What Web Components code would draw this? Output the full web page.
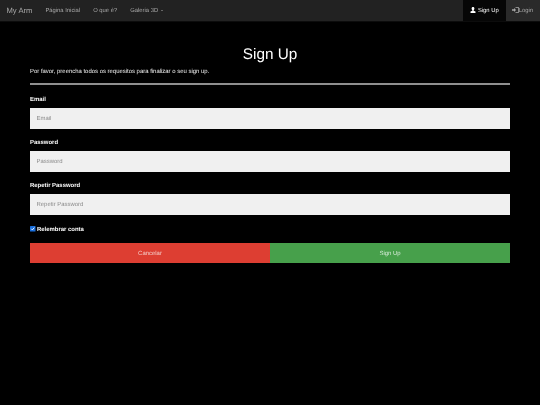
<!DOCTYPE html>
<html lang="pt"><head><meta charset="utf-8"><title>Sign Up</title>
<style>
html,body{margin:0;padding:0;background:#000;color:#fff;font:5.95px/9px "Liberation Sans",Arial,sans-serif;height:405px;overflow:hidden;text-rendering:geometricPrecision}
app-navbar,signup-form{filter:blur(.2px)}
</style></head><body>
<app-navbar>
  <nav-link slot="left">Página Inicial</nav-link>
  <nav-link slot="left">O que é?</nav-link>
  <nav-link slot="left" caret>Galeria 3D</nav-link>
  <nav-link slot="right" active icon="user">Sign Up</nav-link>
  <nav-link slot="right" soft icon="login">Login</nav-link>
</app-navbar>
<signup-form>
  <form-field label="Email" placeholder="Email"></form-field>
  <form-field label="Password" placeholder="Password"></form-field>
  <form-field label="Repetir Password" placeholder="Repetir Password"></form-field>
</signup-form>
<script>
function def(name, html, init){
  customElements.define(name, class extends HTMLElement{
    constructor(){super();this.attachShadow({mode:'open'}).innerHTML=html;}
    connectedCallback(){ if(init) init(this,this.shadowRoot); }
  });
}
def('app-navbar',`<style>
:host{display:flex;height:21px;background:#222;border-bottom:1px solid #0c0c0c}
.brand{font-size:7.65px;color:#a8a8a8;padding:1px 6.5px 0;line-height:20px}
.l,.r{display:flex}.sp{flex:1}
</style><div class="brand">My Arm</div><div class="l"><slot name="left"></slot></div><div class="sp"></div><div class="r"><slot name="right"></slot></div>`);
const icons={
 user:`<svg width="6" height="6" viewBox="0 0 12 12" fill="#fff"><path d="M6 0C4.2 0 3.2 1.4 3.2 3.2c0 1.4.6 2.6 1.5 3.2v1L1 9v3h10V9L7.3 7.400v-1c.9-.6 1.500-1.800 1.500-3.200C8.800 1.400 7.800 0 6 0z"/></svg>`,
 login:`<svg width="7" height="6" viewBox="0 0 14 12" fill="#a8a8a8"><path d="M0 4.500h4V2l4 4-4 4V7.500H0z"/><path d="M7 0h5a2 2 0 0 1 2 2v8a2 2 0 0 1-2 2H7v-1.500h4.500a1 1 0 0 0 1-1v-7a1 1 0 0 0-1-1H7z"/></svg>`};
def('nav-link',`<style>
:host{display:flex;padding:0 6.5px;color:#a8a8a8;font-size:5.85px;height:21px;white-space:nowrap}
:host([active]){background:#060606;color:#fff;padding:0 7px}
:host([soft]){background:#2a2a2a;padding:0 7px 0 6px}
:host([active]) #i{margin-right:1.5px}
.t{display:block;line-height:20px;padding-top:1px}
.c{width:0;height:0;border:1.8px solid transparent;border-top-color:#a8a8a8;border-bottom:0;margin-left:3px;align-self:center}
#i{display:inline-flex;align-self:center;margin-top:-.5px}
</style><span id="i"></span><span class="t"><slot></slot></span><span id="c"></span>`,(h,s)=>{
  const n=h.getAttribute('icon'); if(n) s.getElementById('i').innerHTML=icons[n];
  if(h.hasAttribute('caret')) s.getElementById('c').className='c';
});
def('form-field',`<style>
:host{display:block;margin-bottom:10.5px}
label{display:block;font-weight:700;color:#fff;font-size:5.95px;line-height:9px;margin-bottom:2.5px}
input{display:block;box-sizing:border-box;width:100%;height:21px;border:0;margin:0;padding:1.5px 6.5px 0;background:#f0f0f0;font:5.95px "Liberation Sans",Arial,sans-serif;color:#555;border-radius:0;outline:0;text-rendering:geometricPrecision}
input::placeholder{color:#8c8c8c;opacity:1}
</style><label></label><input type="text">`,(h,s)=>{
  s.querySelector('label').textContent=h.getAttribute('label');
  s.querySelector('input').placeholder=h.getAttribute('placeholder');
});
def('signup-form',`<style>
:host{display:block;padding:0 30px}
h1{font-weight:400;font-size:15.3px;line-height:18px;margin:0;text-align:center;padding-top:24px;color:#fff}
p{margin:4px 0 0;font-size:5.95px;line-height:9px;color:#f0f0f0}
hr{border:0;height:1.5px;margin:6px 0 11.5px;background:#8f8f8f}
.rem{display:flex;font-weight:700;font-size:5.95px;line-height:9px;gap:1.5px;padding-top:1px;margin-bottom:8px}
.rem svg{margin-top:.2px}
.btns{display:flex}
button{flex:1;height:20px;border:0;margin:0;padding:1px 0 0;color:#f4cbc7;font:5.95px "Liberation Sans",Arial,sans-serif;background:#dd3e32;text-rendering:geometricPrecision}
button.ok{background:#47a04b;color:#d6ead7}
</style><h1>Sign Up</h1><p>Por favor, preencha todos os requesitos para finalizar o seu sign up.</p><hr><slot></slot>
<div class="rem"><svg width="5.500" height="5.500" viewBox="0 0 11 11"><rect width="11" height="11" rx="1" fill="#1a6fdc"/><path d="M2.500 5.500l2.200 2.300 4-4.600" fill="none" stroke="#fff" stroke-width="1.800"/></svg><span>Relembrar conta</span></div>
<div class="btns"><button>Cancelar</button><button class="ok">Sign Up</button></div>`);
</script>
</body></html>
